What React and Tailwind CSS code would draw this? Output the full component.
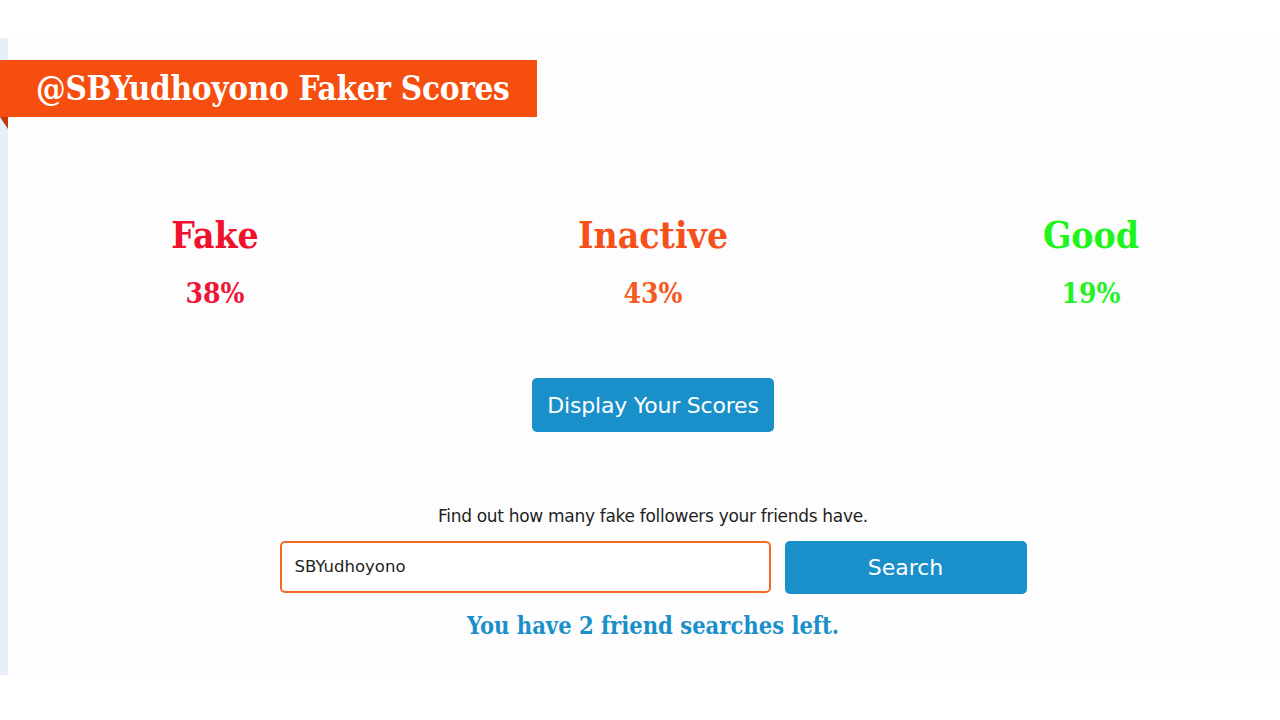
const SLAB = { fontFamily: '"DejaVu Serif Condensed", "DejaVu Serif", "Liberation Serif", serif' };

const SCORES = [
  { label: 'Fake', value: '38%', head: 'text-[#f0112d]', num: 'text-[#ef1536]' },
  { label: 'Inactive', value: '43%', head: 'text-[#f5521b]', num: 'text-[#f55a22]' },
  { label: 'Good', value: '19%', head: 'text-[#1ff51a]', num: 'text-[#25f225]' },
];

export default function App() {
  return (
    <div className="w-[1280px] h-[720px] bg-white overflow-hidden pt-[38px] font-['DejaVu_Sans','Liberation_Sans',sans-serif]">
      <div className="flex h-[637px]">
        <div className="w-[8px] bg-[#e4eff9]" />
        <div className="flex-1 bg-[#fdfdfd] pt-[22px]">
          {/* ribbon title */}
          <div className="relative -ml-[8px] w-[537px]">
            <div className="h-[57px] bg-[#f64e0e] flex items-center pl-[36px]">
              <h1 className="text-white text-[33px] font-bold tracking-[-0.3px]" style={SLAB}>
                @SBYudhoyono Faker Scores
              </h1>
            </div>
            <div className="absolute left-0 top-[57px] w-0 h-0 border-t-[12px] border-t-[#c23a08] border-l-[8px] border-l-transparent" />
          </div>

          <div className="grid grid-cols-[300px_300px_300px] gap-x-[138px] ml-[57px] mt-[98px]">
            {SCORES.map(s => (
              <div key={s.label} className="flex flex-col items-center">
                <div className={`text-[37px] font-bold leading-[40px] ${s.head}`} style={SLAB}>{s.label}</div>
                <div className={`mt-[24px] text-[28px] font-bold leading-[30px] ${s.num}`} style={SLAB}>{s.value}</div>
              </div>
            ))}
          </div>

          <div className="flex flex-col items-center pl-[18px]">
            <button className="mt-[69px] w-[242px] h-[54px] rounded-[5px] bg-[#1990c9] text-white text-[22px] tracking-[-0.2px]">
              Display Your Scores
            </button>
            <p className="mt-[72px] text-[17px] text-[#1f1f1f] tracking-[-0.3px]">
              Find out how many fake followers your friends have.
            </p>
            <div className="flex gap-[14px] mt-[11px]">
              <input
                readOnly
                value="SBYudhoyono"
                className="w-[491px] h-[52px] border-2 border-[#f36a28] rounded-[5px] bg-white px-[13px] text-[16.5px] text-[#222] outline-none"
              />
              <button className="w-[242px] h-[53px] rounded-[5px] bg-[#1990c9] text-white text-[22px]">
                Search
              </button>
            </div>
            <p className="mt-[15px] text-[23.5px] font-bold text-[#1990c9]" style={SLAB}>
              You have 2 friend searches left.
            </p>
          </div>
        </div>
      </div>
    </div>
  );
}
